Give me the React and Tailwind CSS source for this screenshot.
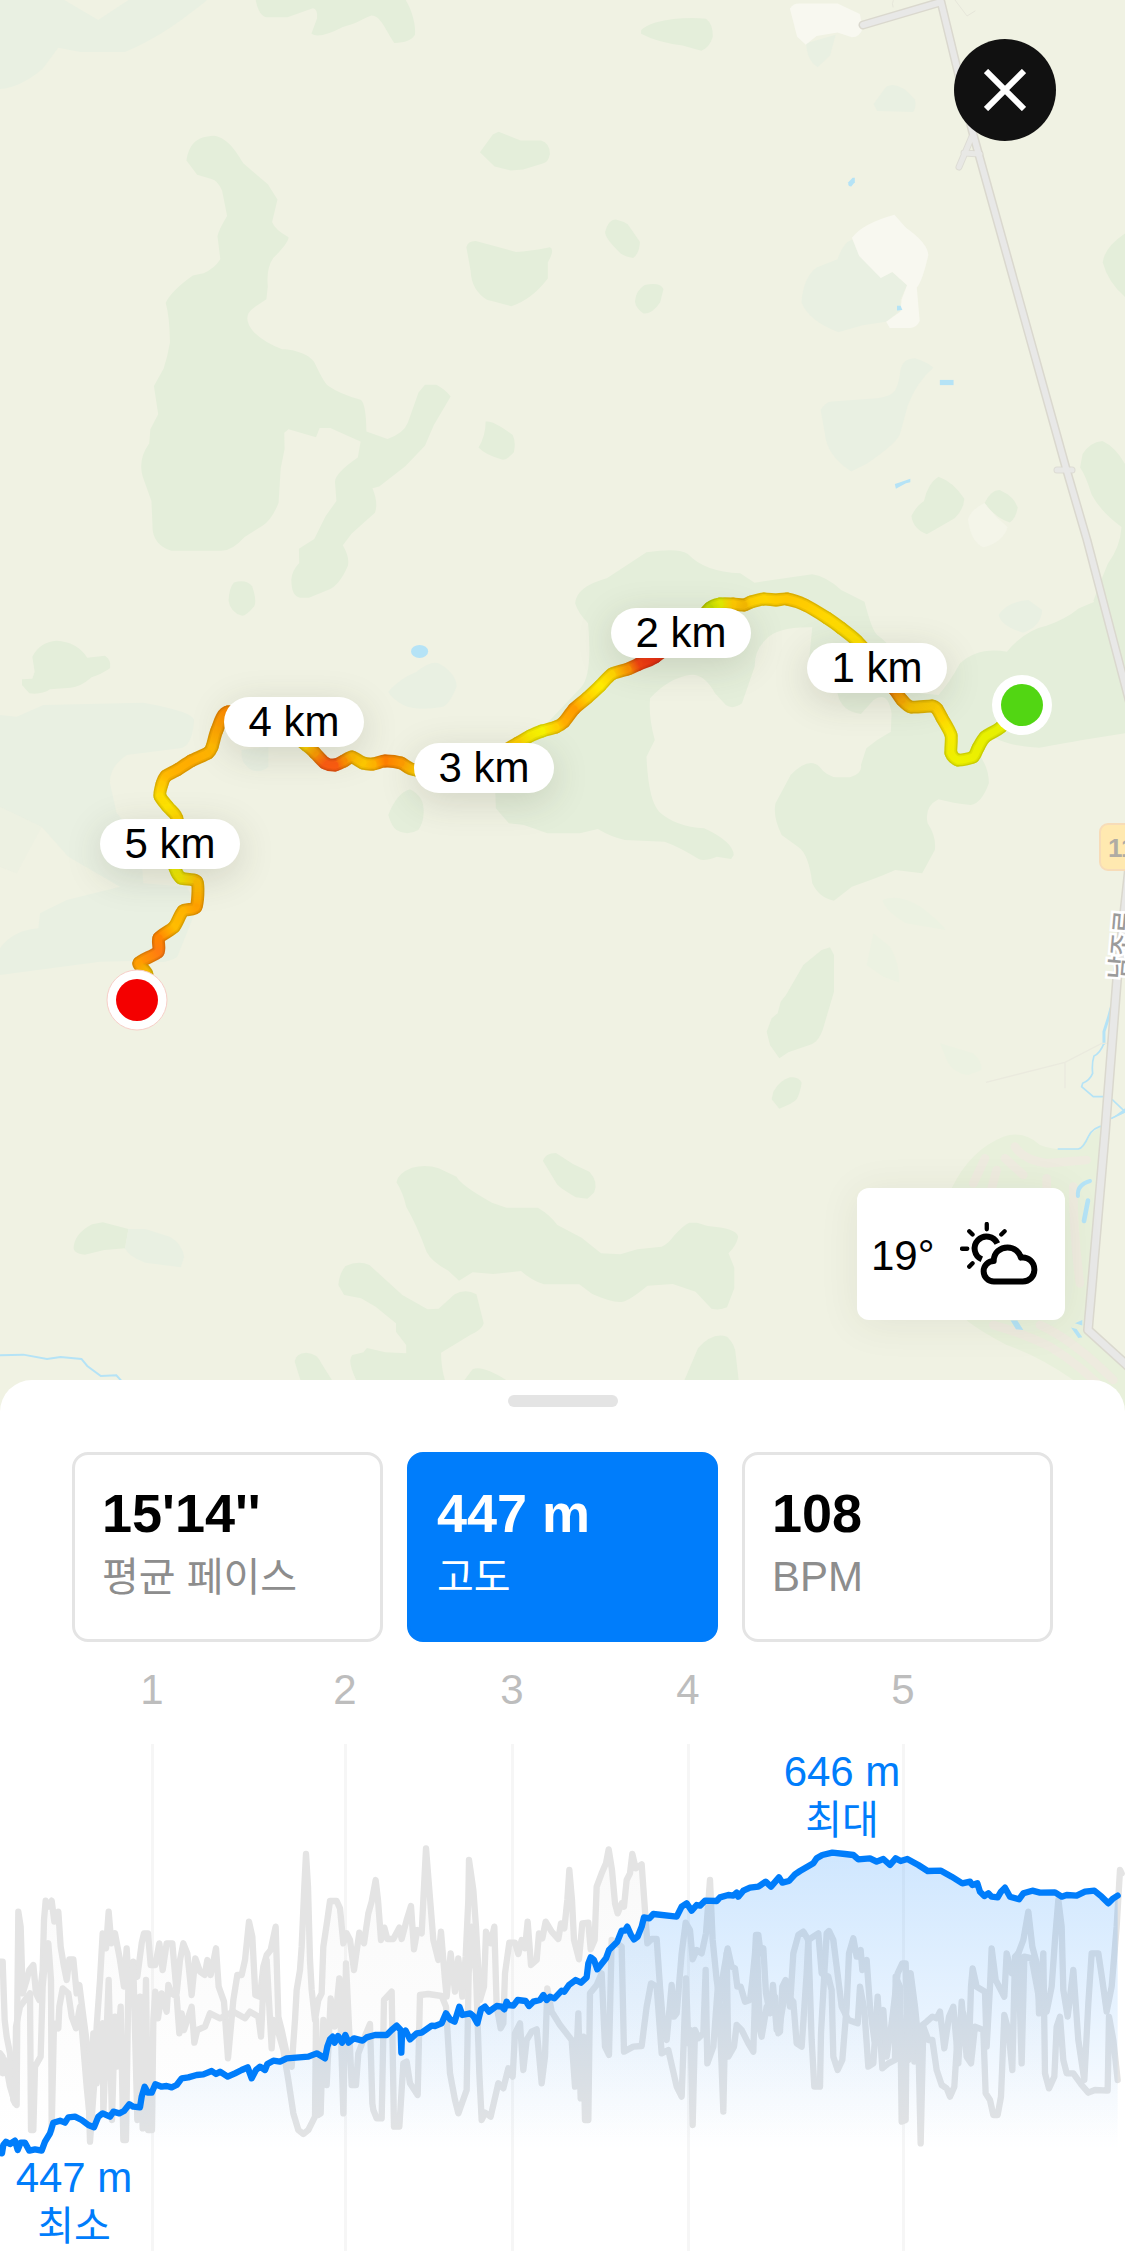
import { useState } from "react";

// Stats shown as selectable cards in the bottom sheet
const metrics = [
  { id: "pace", value: "15'14''", label: "평균 페이스", korean: true },
  { id: "elevation", value: "447 m", label: "고도", korean: true },
  { id: "heart", value: "108", label: "BPM", korean: false },
];

// Map is drawn on a 1125 x 1420 canvas
const MAP_WIDTH = 1125;
const MAP_HEIGHT = 1420;

const kmMarkers = [
  { km: 1, x: 877, y: 668 },
  { km: 2, x: 681, y: 633 },
  { km: 3, x: 484, y: 768 },
  { km: 4, x: 294, y: 722 },
  { km: 5, x: 170, y: 844 },
];

// Route points with the pace colour at each one: [x, y, colour]
const route = [
  [1022, 704, "#e4f000"], [1001, 727, "#e6f000"], [985, 737, "#e8f000"], [978, 748, "#eaf000"],
  [973, 757, "#ecf000"], [958, 760, "#eef200"], [951, 753, "#f0ee00"], [951, 735, "#f8ec00"],
  [942, 718, "#ffd800"], [937, 709, "#ffd000"], [932, 706, "#fccc00"], [911, 707, "#f8c400"],
  [902, 700, "#f8a800"], [895, 690, "#ee8400"], [875, 662, "#ffb400"], [857, 641, "#ffe000"],
  [841, 628, "#ffdc00"], [827, 618, "#ffd800"], [805, 605, "#ffcc00"], [787, 599, "#ffc800"],
  [776, 600, "#ffcc00"], [764, 599, "#ffd400"], [751, 602, "#ffd000"], [744, 605, "#f4b800"],
  [733, 604, "#ffc800"], [720, 604, "#e4ec00"], [710, 608, "#c4dc00"], [690, 630, "#f0a000"],
  [655, 657, "#f02c10"], [639, 664, "#f84010"], [628, 669, "#ff9400"], [612, 674, "#ffd400"],
  [600, 686, "#ffec00"], [587, 698, "#ffd000"], [574, 709, "#ff9c00"], [564, 722, "#ffac00"],
  [556, 727, "#ffd000"], [542, 731, "#f8f400"], [530, 736, "#f8ec00"], [518, 743, "#ffd000"],
  [470, 768, "#ffc000"], [416, 770, "#ffcc00"], [401, 763, "#ff9c00"], [385, 761, "#ff8000"],
  [373, 764, "#ffb400"], [363, 763, "#ffc800"], [352, 757, "#ffb800"], [344, 761, "#ff9000"],
  [335, 765, "#ff5c10"], [325, 763, "#ff5c10"], [315, 753, "#ff9c00"], [306, 745, "#ffd400"],
  [270, 720, "#ffb400"], [228, 712, "#ff8c00"], [217, 730, "#ffa400"], [212, 747, "#ffb800"],
  [208, 753, "#ffb400"], [191, 761, "#ffac00"], [177, 770, "#ffb000"], [166, 776, "#ffb800"],
  [162, 784, "#ffc800"], [160, 796, "#ffdc00"], [168, 807, "#ffe400"], [177, 819, "#ffd400"],
  [170, 845, "#ffd800"], [175, 868, "#f0f000"], [181, 878, "#f4e800"], [197, 882, "#ffc000"],
  [196, 907, "#ffa000"], [183, 911, "#ffb400"], [174, 927, "#ffbc00"], [159, 938, "#ff8400"],
  [158, 952, "#ff7c10"], [139, 963, "#ff9c00"], [147, 975, "#f0c000"], [137, 1000, "#ffb000"],
];

// Lines are stored in chunks, each with its own origin, and joined here
function joinChunks(chunks) {
  return chunks
    .map(([dx, dy, text]) =>
      text
        .split(" ")
        .map((pair) => {
          const [x, y] = pair.split(",").map(Number);
          return `${x + dx},${y + dy}`;
        })
        .join(" ")
    )
    .join(" ");
}

const elevationLine = joinChunks([
  [0, 240, "0,985 6,1000 10,975 18,965 30,972 45,962 53,990 62,968 75,968 88,992 105,988 125,992 135,965 150,940 160,908 180,902 195,908 205,892 225,890 245,900 265,915 282,922 295,890 308,880 330,890 340,875 358,880 372,873 388,853 400,860 420,862 425,830 434,800 444,818 455,818 466,793 485,800 500,798 515,802 530,795 545,775 565,772 590,765 610,763 635,753 648,762 660,755 683,770 705,760 725,750 743,742 755,775 768,750 780,740 795,750 802,732 820,722 840,725 860,715 925,710 950,700 975,715 982,680 990,658 998,650 1004,668 1014,648 1026,668 1036,645 1046,668 1062,655 1088,662 1100,652 1125,645"],
  [1110, 0, "30,885 50,885 65,870 80,857 92,870 94,938 96,885 107,872 120,898 140,880 155,878 185,857 195,858 215,850 228,820 240,838 254,845 268,800 277,825 300,820 310,828 322,850 333,808 345,800 357,815 380,798 395,800 403,808 410,785 415,795 430,797 443,780 467,783 477,798 490,785 510,780 520,765 530,780 540,770 553,775 575,752 583,755 597,735 617,720 633,728 650,712 655,670 662,652 672,660 682,688 708,655 717,630 742,605 755,572 765,572 772,560 783,585 792,598 803,590 815,560 822,532 838,535 850,522 920,530 935,500 950,490 965,512 980,495 990,497 1005,482 1040,483 1050,472 1075,465 1090,467 1100,458 1105,470 1120,452"],
  [2235, 0, "15,443 40,440 62,425 78,440 102,412 112,428 132,423 150,403 165,393 205,370 215,355 232,345 262,338 300,342 325,345 340,358 375,355 395,365 415,357 435,375 452,355 467,363 487,357 520,375 548,393 588,392 620,410 652,430 675,425 682,435 697,430 705,455 718,468 730,460 740,470 758,472 768,455 780,443 795,470 822,478 835,460 862,452 885,458 930,457 950,470 965,465 995,467 1020,455 1048,452 1070,470 1090,490 1105,475 1118,467"],
]);

const paceLine = joinChunks([
  [0, 240, "0,425 8,425 14,600 20,650 30,700 40,840 50,855 52,560 55,275 62,320 68,520 80,480 88,450 100,435 108,520 118,540 128,450 132,300 137,242 145,260 155,242 163,305 175,275 182,380 192,440 200,480 208,418 220,418 230,520 238,495 250,590 262,680 270,965 282,800 290,620 300,480 308,340 318,385 326,275 334,370 345,340 360,420 372,500 380,385 388,520 400,425 412,470 425,370 432,340 444,340 452,435 466,435 478,370 488,450 500,370 517,370 530,520 540,420 550,370 562,400 575,525 586,415 600,455 614,465 622,420 632,465 648,385 656,500 672,545 684,715 700,540 712,465 725,465 735,420 747,305 757,350 766,525 780,530 790,440 800,405 812,390 827,320 835,590 845,630 860,700 875,740 885,600 890,510 900,450 905,380 913,200 918,102 924,200 930,420 935,510 945,600 955,540 965,520 970,380 982,300 990,243 1010,243 1020,265 1030,370 1040,340 1050,360 1062,450 1078,338 1092,370 1105,280 1115,245 1127,180"],
  [1110, 0, "24,480 33,600 43,563 52,597 70,597 88,563 95,597 110,540 123,498 132,628 142,570 155,580 160,480 168,325 178,450 190,600 205,660 213,575 225,720 230,770 242,640 255,755 265,655 277,770 287,650 295,480 297,360 310,450 318,560 330,780 342,740 348,575 362,610 373,560 380,800 392,865 400,850 405,700 418,608 435,608 445,642 455,600 465,625 473,545 483,675 500,660 507,580 517,595 527,545 545,575 565,597 573,550 583,565 592,480 598,390 606,480 612,600 627,658 637,550 655,548 662,628 674,600 680,440 695,400 708,370 716,328 726,390 735,490 743,520 755,490 762,500 770,420 780,400 787,342 797,385 815,373 822,470 832,610 845,597 860,597 870,740 880,860 890,900 905,735 912,830 920,820 935,640 947,548 960,570 968,658 980,630 995,640 1008,580 1020,420 1028,600 1040,720 1050,780 1060,700 1073,625 1085,680 1095,685 1102,740 1112,740"],
  [2235, 0, "0,785 15,780 22,720 30,640 33,585 40,585 47,640 55,625 63,760 75,820 84,735 95,870 105,875 112,740 122,720 135,800 145,640 160,585 175,575 190,600 200,900 208,1040 225,1040 228,880 238,700 245,580 252,573 265,600 275,680 290,800 310,840 338,850 345,740 358,810 370,980 385,970 398,770 412,985 430,970 450,960 452,710 465,740 470,1145 482,1140 485,840 495,700 508,965 525,860 545,845 562,830 575,835 585,815 598,925 612,830 625,800 640,970 650,785 665,950 678,970 690,860 715,870 722,1060 735,1080 745,1125 758,1125 768,1070 778,825 790,870 802,990 810,650 820,640 830,970 838,650 860,655 885,790 895,640 900,1000 912,1045 928,1010 935,860 945,830 955,960 965,1000 985,1000 1010,1035 1030,1058 1050,1050 1088,1052 1092,830 1105,900 1118,1020"],
]);

const heartLine = joinChunks([
  [0, 240, "0,700 8,710 8,760 15,720 30,800 45,850 48,620 60,560 90,520 93,930 100,930 105,740 122,710 128,500 137,400 145,370 153,480 155,930 162,610 175,625 178,560 188,505 205,520 215,590 228,625 240,560 260,800 270,900 280,640 290,790 300,620 308,610 310,880 326,480 336,900 345,590 350,740 362,560 370,960 378,960 385,500 400,440 412,900 420,530 428,925 438,480 444,930 456,930 460,600 466,515 474,595 485,520 500,575 505,495 515,520 530,530 538,640 545,580 552,630 575,560 583,668 592,630 615,620 630,580 660,595 700,575 735,595 750,575 775,590 783,650 790,500 800,420 815,685 820,600 830,620 850,690 865,780 880,880 895,930 910,942 925,930 945,890 948,600 955,885 962,880 970,600 980,795 992,535 1004,620 1018,475 1030,880 1038,430 1048,640 1055,795 1068,795 1075,700 1090,660 1110,612 1117,850"],
  [1110, 0, "10,1110 20,1135 35,1135 42,780 65,755 72,1160 88,1160 100,970 110,965 120,1030 143,1065 150,765 175,762 215,768 228,800 240,1000 255,1080 265,1120 290,1050 296,700 305,560 318,700 328,1000 335,1140 345,1118 362,1130 385,1030 400,1045 415,985 428,1010 435,880 450,850 460,990 470,900 485,875 500,868 515,1030 525,950 532,745 545,815 570,855 605,900 615,1040 625,820 632,1075 640,890 645,1140 655,1140 660,760 680,735 695,700 705,920 717,945 725,600 740,610 755,620 762,935 790,920 815,918 830,800 843,730 860,740 875,940 895,930 920,1040 935,1070 948,715 955,910 962,870 968,1155 975,870 985,895 1000,880 1007,690 1012,970 1030,920 1045,720 1060,1115 1070,640 1075,950 1092,920 1100,855 1115,870"],
  [2235, 0, "10,910 25,935 35,600 45,870 50,890 65,800 90,770 100,880 120,760 145,785 155,910 170,920 185,700 190,600 205,590 220,580 230,700 250,710 260,750 265,950 278,990 292,960 305,800 312,640 325,595 335,650 347,630 352,690 365,660 375,800 388,900 400,870 415,810 425,950 440,850 458,700 472,670 482,670 490,960 497,700 510,800 520,900 527,1210 535,860 550,900 562,900 575,990 590,1035 605,1045 615,1070 628,1040 640,850 655,820 672,930 678,740 683,685 695,740 720,755 725,920 735,740 740,625 752,720 778,770 785,640 800,700 820,640 835,600 850,515 862,620 878,680 882,820 905,815 920,740 930,600 940,480 950,560 955,750 968,830 985,690 1000,900 1018,1020 1030,790 1040,640 1060,640 1072,720 1085,815 1100,740 1115,560 1125,390 1130,400"],
]);

const kmTicks = [
  { km: 1, x: 152 },
  { km: 2, x: 345 },
  { km: 3, x: 512 },
  { km: 4, x: 688 },
  { km: 5, x: 903 },
];

function Terrain() {
  return (
    <>
      {/* North west */}
      <g transform="scale(.3571 .4337)">
        <path fill="#e9f0e2" d="M0 0H580C520 40 440 90 350 120H225L163 110L120 158C90 180 40 205 0 205Z" />
        <path fill="#f0f2e3" d="M180 0L275 46L360 0Z" />
        <g fill="#e4eeda">
          <path d="M716 0H1136C1155 25 1165 60 1162 80Q1150 98 1104 99C1080 70 1065 35 1040 36C1010 45 1000 55 960 62Q895 90 872 78L888 42Q890 20 876 19L805 40H748Q725 38 716 0Z" />
          <path d="M522 370C530 335 545 315 600 313C640 318 665 355 682 377L750 425L777 460L762 512Q770 530 808 547Q808 560 765 595Q745 620 750 660L746 690L710 710Q675 730 710 765Q740 790 790 805C830 805 870 820 880 835C895 860 910 885 920 890Q950 908 1010 922Q1025 930 1026 995L1085 1012Q1130 1000 1142 975L1172 905L1190 887H1222Q1250 900 1262 914L1215 980L1190 1028L1135 1075L1062 1122L1043 1126Q1060 1160 1050 1182L985 1230L960 1257Q980 1285 974 1305Q950 1350 920 1360L865 1378H840Q815 1375 816 1335Q818 1315 838 1298L837 1265L880 1243L912 1190L942 1155L938 1110Q940 1090 1002 1055L1010 1018L995 1013L925 987H895L885 1008L808 990L796 998L797 1035L786 1080L780 1160Q760 1200 735 1212L685 1238Q650 1270 620 1270H480Q425 1255 427 1210L424 1155L400 1100Q385 1060 418 1022L421 990L443 955L431 890L458 850Q470 820 476 790Q475 730 464 698Q480 670 540 635L570 630Q600 620 617 598L609 545Q612 530 636 498L622 440Q610 415 590 412L552 403Z" />
          <path d="M1344 351L1380 310L1396 304L1458 324H1515Q1540 330 1540 355Q1535 375 1520 377L1465 391L1430 393L1385 384Z" />
          <path d="M1306 570Q1310 555 1335 556L1445 581Q1480 580 1540 570Q1555 575 1534 605V642Q1490 690 1432 706Q1380 695 1365 692Q1320 670 1318 625Z" />
          <path d="M1360 972Q1380 968 1436 1003Q1445 1020 1439 1043Q1420 1060 1408 1060Q1360 1050 1340 1032Q1360 1005 1360 972Z" />
          <path d="M655 1343Q690 1335 706 1352Q720 1385 712 1398Q690 1420 678 1420Q645 1412 640 1385Q642 1355 655 1343Z" />
        </g>
        <ellipse cx="1175" cy="1502" rx="24" ry="15" fill="#b5e3f6" />
      </g>

      {/* North east */}
      <g transform="translate(560) scale(.3604 .4337)">
        <g fill="#e4eeda">
          <path d="M225 70Q235 60 265 52Q330 38 405 43Q425 55 424 85Q415 110 392 117L340 105Q270 98 225 78Z" />
          <path d="M125 535Q135 505 155 506Q175 510 188 517L222 558Q220 585 203 595Q180 592 168 584Q125 550 125 535Z" />
          <path d="M208 695Q210 670 235 657Q280 650 287 667Q280 690 278 697Q255 725 232 723Q210 710 208 695Z" />
          <path d="M1568 538Q1510 570 1506 605Q1520 650 1568 685Z" />
          <path d="M1450 1047Q1470 1020 1505 1017Q1540 1030 1568 1070V1500L1480 1385Q1500 1340 1520 1300Q1555 1260 1558 1215Q1500 1180 1475 1140Q1458 1095 1443 1078Z" />
          <path d="M975 1190Q990 1165 1010 1155Q1020 1115 1050 1099Q1090 1110 1122 1150Q1120 1175 1095 1195L1018 1232Q980 1220 975 1190Z" />
          <path d="M1178 1160Q1195 1130 1220 1130Q1260 1145 1270 1170Q1265 1195 1248 1205Q1210 1195 1178 1160Z" />
        </g>
        <g fill="#e9f0e2">
          <path d="M683 100L765 80Q755 110 750 127L715 155Q685 140 683 100Z" />
          <path d="M870 240L905 200Q940 185 985 230Q990 245 980 258L880 256Z" />
          <path d="M810 552L890 640L922 627L963 658L945 690V715L905 742L840 750L772 766Q690 740 670 697Q675 640 712 617L770 598Q785 560 810 552Z" />
          <path d="M945 850Q955 825 985 826Q1020 835 1036 848Q990 880 965 935L943 1002Q930 1025 850 1070L808 1087Q740 1050 735 1000L723 945Q740 925 755 926L880 918Q920 915 930 900Q942 880 945 850Z" />
        </g>
        <g fill="#f8f8f0">
          <path d="M638 20Q645 8 665 8H770L832 32L840 65Q832 86 810 86L770 75L712 83L682 103L658 85Z" />
          <path d="M810 548Q840 515 928 495L960 525Q1020 560 1022 588Q1005 650 990 663L998 740Q990 756 970 756H915L905 742L945 718L948 690L963 658L922 627L890 641L830 590Z" />
        </g>
        <path fill="#f4f5e9" d="M1178 1160Q1140 1175 1132 1197Q1140 1250 1175 1262Q1230 1250 1242 1215Q1205 1190 1178 1160Z" />
        <g fill="#b5e3f6">
          <path d="M800 420L812 410H818V420L808 430Q798 430 800 420Z" />
          <path d="M935 705H945L950 715L935 716Z" />
          <path d="M1054 876H1092V888H1054Z" />
          <path d="M929 1116L940 1113L972 1104L972 1112L960 1114L932 1127Z" />
        </g>
      </g>

      {/* West */}
      <g transform="translate(0 640) scale(.3333)">
        <path
          fill="#e9f0e2"
          d="M0 225L50 230L130 195L430 188Q580 215 582 240Q578 318 540 325L380 345Q328 380 330 430L350 520L420 600L430 730L560 740L592 800Q560 880 532 950Q500 975 430 962L300 965L0 1005V925Q40 870 115 865L120 820L200 780L360 740L205 650L125 560L0 500Z"
        />
        <path fill="#e9f0e2" d="M0 500L125 560L50 700L0 680Z" opacity=".5" />
        <path fill="#e9f0e2" d="M725 330L805 320V380Q785 400 755 390Q720 370 725 330Z" />
        <path fill="#e9f0e2" d="M1165 155Q1200 115 1250 95Q1300 55 1325 75Q1370 105 1370 140Q1350 190 1330 200Q1250 215 1210 195Q1175 175 1165 155Z" />
        <path fill="#e4eeda" d="M97 50Q120 5 170 2Q230 5 262 53L315 47Q335 60 330 85Q300 105 275 112Q240 142 212 143L150 148Q125 165 88 160L66 135V118L97 116L104 95Z" />
        <path fill="#e4eeda" d="M1165 525Q1190 460 1230 448Q1275 470 1271 520Q1270 550 1255 570Q1220 590 1190 570Q1175 560 1165 525Z" />
      </g>

      {/* Centre and east */}
      <g transform="translate(560 540) scale(.3604 .3333)">
        <path fill="#e4eeda" d="M42 190Q45 140 130 115L240 37Q330 22 355 42Q400 95 500 100L540 128L700 103Q740 110 780 150L845 185Q865 270 880 285Q930 320 1000 460L1050 465Q1080 430 1110 370Q1160 320 1240 335Q1290 270 1350 257Q1400 240 1440 205L1500 178V140L1568 20V580L1450 600Q1400 610 1330 623Q1250 620 1200 590L1160 640Q1190 680 1190 730Q1170 790 1140 795Q1090 790 1050 778Q1010 800 1020 850Q1045 890 1040 930L1005 1000L930 990Q890 1010 810 1040L760 1082Q720 1075 700 1030Q690 940 660 920L615 885Q590 830 598 790L640 705Q690 650 720 680Q740 710 770 712H805Q840 700 835 675L850 625L880 600L918 575L920 520Q910 450 870 480L835 522Q780 515 770 460Q700 450 690 370L700 262Q600 260 570 300Q540 330 540 380L505 490Q480 510 460 495L430 460Q400 400 360 405Q300 415 250 475Q245 530 263 600L240 650Q245 780 275 815Q320 860 400 865Q480 905 482 945L475 957L435 950Q400 965 385 957Q330 920 290 905L180 900Q140 890 105 867L55 880H-35L-100 855L-142 850L-178 805L-180 740L-80 600L60 440Q90 400 78 250Q50 220 42 190Z" />
        <path fill="#e9f0e2" d="M1217 225Q1240 185 1300 180L1338 210Q1335 260 1285 278Q1225 260 1217 225Z" />
        <path fill="#ecf2e2" d="M895 1080Q940 1060 1000 1100Q1060 1150 1070 1170L960 1150Q900 1110 895 1080Z" />
      </g>

      {/* South west */}
      <g transform="translate(0 1040) scale(.4847 .3333)">
        <g fill="#e4eeda">
          <path d="M1120 362Q1125 340 1147 339L1182 372L1216 395Q1235 425 1226 457L1212 476L1188 472Q1150 440 1148 430Z" />
          <path d="M818 427Q820 400 850 383Q880 372 905 385L942 410Q950 435 1015 488L1045 503H1110Q1135 525 1150 555L1200 593L1240 640L1280 643L1315 628L1365 620Q1380 610 1390 588Q1410 555 1422 548H1438L1460 558Q1520 565 1523 590Q1520 615 1503 640L1515 683V745L1500 802Q1485 812 1468 806L1435 755L1388 732L1336 737Q1300 780 1285 785Q1265 790 1222 762L1195 733H1122Q1095 720 1075 693L1018 702L975 697L947 722L925 692Q890 665 880 635Q860 555 838 500Q832 460 818 427Z" />
          <path d="M698 735Q700 700 713 678Q740 660 762 675L830 765L882 808L905 806L938 763Q960 745 983 763L998 850Q995 870 970 885L910 938Q910 980 918 1021H735Q715 960 727 945L750 937L757 924L795 937L838 940V915L817 875V850L775 800L745 775L710 765Z" />
          <path d="M608 965Q610 940 632 938Q655 940 663 970L685 1021H620Z" />
          <path d="M958 1021L975 988Q995 975 1045 1021Z" />
          <path d="M1412 1021L1440 925Q1470 875 1500 890Q1518 915 1518 945L1524 1021Z" />
          <path d="M152 620Q155 580 190 553L212 547L265 567L258 625L215 630L175 644Q150 640 152 620Z" />
        </g>
        <path fill="#e9f0e2" d="M265 567H300L350 590Q375 610 380 650L373 682L300 668Q265 650 258 625Z" />
        <path
          fill="none"
          stroke="#b5e3f6"
          strokeWidth="2"
          vectorEffect="non-scaling-stroke"
          d="M0 946L48 944L97 957L125 951L168 957L180 978L208 1008L240 1006L250 1022"
        />
      </g>

      {/* South east */}
      <g transform="translate(740 900) scale(.3333)">
        <g fill="#e4eeda">
          <path d="M80 395L95 355L113 340L122 305L138 285L190 195L245 150L270 142L282 165V275L248 390Q235 425 215 433L145 457L118 475L90 435Z" />
          <path d="M95 598L100 575Q120 540 150 532Q175 530 185 548Q180 580 170 598Q160 610 118 626Z" />
        </g>
        <path fill="#ecf2e2" d="M600 430L700 460Q730 490 725 510L685 525Q640 520 620 480Z" />
        <path fill="#ecf2e2" d="M400 100L450 140Q480 190 478 248L430 230L380 195Z" />
        <path fill="#e8f0db" d="M635 865Q690 750 790 710Q850 690 900 735Q950 755 1020 745Q1050 690 1100 675L1045 1290L1155 1400V1560L1000 1440Q900 1370 800 1335Q730 1300 680 1262L900 1200Z" />
        <g fill="none" stroke="#eeebdf" strokeWidth="26" strokeLinecap="round">
          <path d="M825 740Q850 780 920 790L1040 780" />
          <path d="M795 775L850 825" />
          <path d="M735 775L700 850" />
          <path d="M770 810L755 865" />
          <path d="M920 835V865" />
          <path d="M1000 860Q1000 1000 1020 1150" />
          <path d="M760 1275Q850 1300 930 1340Q1030 1400 1120 1500" />
          <path d="M900 1275Q1000 1320 1120 1440" />
        </g>
        <g fill="none" stroke="#b5e3f6" strokeLinecap="round">
          <path strokeWidth="9" d="M1113 325L1105 355L1092 395V430" />
          <path strokeWidth="5" d="M1092 430Q1080 460 1062 468Q1055 490 1058 520Q1050 540 1028 550L1025 560L1060 590H1090L1118 600L1155 635L1115 655" />
          <path strokeWidth="5" d="M1095 677Q1060 680 1045 710Q1030 745 1015 747L955 747" />
          <path strokeWidth="12" d="M1050 843Q1010 855 1014 888" />
          <path strokeWidth="14" d="M1044 902L1032 963" />
        </g>
        <path fill="#b5e3f6" d="M812 1262H832L850 1290L828 1288ZM1005 1270L1027 1260V1277ZM993 1283L1010 1287L1027 1312L1015 1314ZM1112 658L1155 625V638Z" />
        <path fill="none" stroke="#eaeade" strokeWidth="4" d="M738 547L975 487L1085 430H1110M975 487V565" />
      </g>
    </>
  );
}

function Roads() {
  const main = "M863 25L941 2L972 130L1066 468L1087 540L1130 704";
  const fork = "M973 134L959 167M964 153L980 154M1057 470H1072";
  const south = "M1130 860L1117 980L1105 1133L1088 1330L1130 1368";

  return (
    <>
      <g fill="none" strokeLinejoin="round" strokeLinecap="round">
        <path d="M893 7Q890 0 900 -6M955 0L967 16L975 11" stroke="#e6e6da" strokeWidth="1" />
        <path d={fork} stroke="#dddcd4" strokeWidth="7" />
        <path d={main} stroke="#dad8ce" strokeWidth="9" />
        <path d={south} stroke="#dad8ce" strokeWidth="10" />
        <path d={fork} stroke="#e8e8e5" strokeWidth="5" />
        <path d={main} stroke="#e8e8e7" strokeWidth="6" />
        <path d={south} stroke="#e8e8e7" strokeWidth="7" />
      </g>
      <rect x="1100" y="824" width="60" height="46" rx="8" fill="#ffe9b0" stroke="#f7dcb8" strokeWidth="2" />
      <text x="1108" y="857" fontSize="26" fontWeight="700" fill="#b0aca4">11</text>
      <text
        transform="translate(1127 980) rotate(-85)"
        fontSize="25"
        fontWeight="500"
        fill="#9b9b9b"
        stroke="#fff"
        strokeWidth="5"
        paintOrder="stroke"
      >
        남조로
      </text>
    </>
  );
}

// Curve between points i and i + 1, bent by their neighbours
function curve(i) {
  const [p0, p1, p2, p3] = [route[i - 1] ?? route[i], route[i], route[i + 1], route[i + 2] ?? route[i + 1]];
  const c1 = [p1[0] + (p2[0] - p0[0]) / 8, p1[1] + (p2[1] - p0[1]) / 8];
  const c2 = [p2[0] - (p3[0] - p1[0]) / 8, p2[1] - (p3[1] - p1[1]) / 8];
  return `M${p1[0]} ${p1[1]}C${c1.join(" ")} ${c2.join(" ")} ${p2[0]} ${p2[1]}`;
}

// Route line, one gradient per segment so the colour follows the pace
function Route() {
  const segments = route.slice(1).map((end, i) => ({ start: route[i], end, id: `seg${i}`, d: curve(i) }));

  const lines = (width) =>
    segments.map(({ id, d }) => (
      <path key={id} d={d} fill="none" stroke={`url(#${id})`} strokeWidth={width} strokeLinecap="round" />
    ));

  return (
    <>
      <defs>
        {segments.map(({ start, end, id }) => (
          <linearGradient
            key={id}
            id={id}
            gradientUnits="userSpaceOnUse"
            x1={start[0]}
            y1={start[1]}
            x2={end[0]}
            y2={end[1]}
          >
            <stop offset="0" stopColor={start[2]} />
            <stop offset="1" stopColor={end[2]} />
          </linearGradient>
        ))}
      </defs>
      <g className="brightness-[.86]">{lines(13)}</g>
      <g className="brightness-95">{lines(10)}</g>
      <g>{lines(7)}</g>
      <circle cx="1022" cy="705" r="30" fill="#fff" />
      <circle cx="1022" cy="705" r="21" fill="#52d613" />
      <circle cx="137" cy="1000" r="30" fill="#fff" stroke="#f7cfc8" strokeWidth="1" />
      <circle cx="137" cy="1000" r="21" fill="#f40000" />
    </>
  );
}

function WeatherIcon() {
  return (
    <svg viewBox="660 964 236 192" className="w-[78px]" fill="none" stroke="#000" aria-hidden="true">
      <g strokeWidth="13" strokeLinecap="round">
        <path d="M741 970V986M666 1045H682M688 992L698 1002M795 992L785 1002M688 1099L698 1089" />
      </g>
      <path strokeWidth="18" d="M726 1077A36 36 0 1 1 773 1029" />
      <path
        strokeWidth="18"
        strokeLinejoin="round"
        d="M763 1144A31 31 0 0 1 762 1082C762 1056 782 1041 804 1041C824 1041 840 1054 844 1072C866 1068 885 1085 885 1108C885 1129 870 1144 850 1144Z"
      />
    </svg>
  );
}

function MapView() {
  return (
    <section className="relative" aria-label="Route map">
      <svg viewBox={`0 0 ${MAP_WIDTH} ${MAP_HEIGHT}`} className="block w-full bg-[#f0f2e3]">
        <Terrain />
        <Roads />
        <Route />
      </svg>

      {/* Distance markers */}
      {kmMarkers.map((m) => (
        <span
          key={m.km}
          className="absolute flex h-[50px] w-[140px] -translate-x-1/2 -translate-y-1/2 items-center justify-center rounded-full bg-white text-[42px] leading-none shadow-[0_8px_36px_rgba(60,60,40,0.17)]"
          style={{ left: `${(m.x / MAP_WIDTH) * 100}%`, top: `${(m.y / MAP_HEIGHT) * 100}%` }}
        >
          {m.km} km
        </span>
      ))}

      <button
        type="button"
        aria-label="Close"
        className="absolute top-[39px] right-[69px] flex size-[102px] items-center justify-center rounded-full bg-[#111]"
      >
        <svg viewBox="0 0 42 42" className="size-[42px]" stroke="#fff" strokeWidth="6" aria-hidden="true">
          <path d="M2 2L40 40M40 2L2 40" />
        </svg>
      </button>

      <div className="absolute right-[60px] bottom-[100px] flex h-[132px] w-[208px] items-center justify-between rounded-xl bg-white pr-[27px] pl-[14px] shadow-[0_4px_40px_rgba(60,60,40,0.08)]">
        <span className="pt-1 text-[42px] leading-none">19°</span>
        <WeatherIcon />
      </div>
    </section>
  );
}

function MetricCard({ metric, active, onSelect }) {
  return (
    <button
      type="button"
      aria-pressed={active}
      onClick={onSelect}
      className={`rounded-2xl border-[3px] px-[27px] pt-[30px] pb-[38px] text-left ${
        active ? "border-[#007dfb] bg-[#007dfb] text-white" : "border-[#e4e4e4] bg-white text-black"
      }`}
    >
      <span className="block text-[54px] leading-[56px] font-bold">{metric.value}</span>
      <span
        className={`mt-3 block leading-[48px] ${metric.korean ? "text-[40px]" : "text-[42px]"} ${
          active ? "text-white" : "text-[#8d8d8d]"
        }`}
      >
        {metric.label}
      </span>
    </button>
  );
}

function Chart() {
  return (
    <svg viewBox="0 0 1125 609" className="block w-full" role="img" aria-label="Elevation chart">
      <defs>
        <linearGradient id="elevationFill" gradientUnits="userSpaceOnUse" x1="0" y1="330" x2="0" y2="1230">
          <stop offset="0" stopColor="#007dfb" stopOpacity="0.19" />
          <stop offset="0.5" stopColor="#007dfb" stopOpacity="0.1" />
          <stop offset="1" stopColor="#007dfb" stopOpacity="0" />
        </linearGradient>
        <linearGradient id="paceFill" gradientUnits="userSpaceOnUse" x1="0" y1="330" x2="0" y2="1230">
          <stop offset="0" stopColor="#888" stopOpacity="0.05" />
          <stop offset="1" stopColor="#888" stopOpacity="0" />
        </linearGradient>
      </defs>

      {/* Kilometre ticks */}
      {kmTicks.map((t) => (
        <g key={t.km}>
          <text x={t.x} y="62" textAnchor="middle" fontSize="42" fill="#bdbdbd">
            {t.km}
          </text>
          <rect x={t.x - 1} y="102" width="3" height="507" fill="#f6f6f6" />
        </g>
      ))}

      <g transform="translate(0 98) scale(.33333)" fill="none" strokeLinejoin="round" strokeLinecap="round">
        <polygon points={`0,1230 ${paceLine} 3353,1230`} fill="url(#paceFill)" />
        <polyline points={paceLine} stroke="#e4e4e4" strokeWidth="19" />
        <polyline points={heartLine} stroke="#e4e4e4" strokeWidth="19" />
        <polygon points={`0,1230 ${elevationLine} 3353,1230`} fill="url(#elevationFill)" />
        <polyline points={elevationLine} stroke="#007dfb" strokeWidth="19" />
      </g>

      {/* Highest and lowest point */}
      <g fill="#007dfb" textAnchor="middle">
        <text x="842" y="144" fontSize="42">646 m</text>
        <text x="842" y="192" fontSize="40">최대</text>
        <text x="74" y="550" fontSize="42">447 m</text>
        <text x="74" y="598" fontSize="40">최소</text>
      </g>
    </svg>
  );
}

export default function App() {
  const [selected, setSelected] = useState("elevation");

  return (
    <main className="overflow-hidden bg-white font-['Liberation_Sans','Noto_Sans_CJK_KR',sans-serif] text-black">
      <MapView />

      {/* Bottom sheet */}
      <section className="relative -mt-10 rounded-t-[32px] bg-white pt-[15px]">
        <div className="mx-auto h-3 w-[110px] rounded-full bg-[#e4e4e4]" />
        <div className="mt-[45px] grid grid-cols-3 gap-6 px-[72px]">
          {metrics.map((m) => (
            <MetricCard
              key={m.id}
              metric={m}
              active={selected === m.id}
              onSelect={() => setSelected(m.id)}
            />
          ))}
        </div>
        <Chart />
      </section>
    </main>
  );
}
